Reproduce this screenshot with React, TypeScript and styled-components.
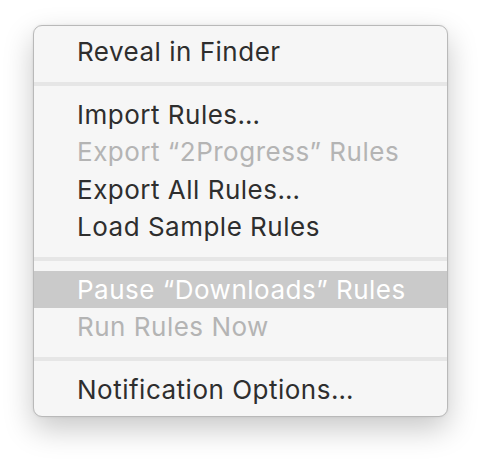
import React from "react";
import styled, { createGlobalStyle } from "styled-components";

const Global = createGlobalStyle`
  html, body { margin: 0; padding: 0; background: #ffffff; }
  body { width: 482px; height: 460px; overflow: hidden; }
`;

const Page = styled.div`
  padding: 25px 34px 0 33px;
  width: 482px;
  box-sizing: border-box;
`;

const Menu = styled.div`
  width: 415px;
  box-sizing: border-box;
  background: #f6f6f6;
  border: 1px solid #b9b9b9;
  border-radius: 9px;
  padding: 7px 0 8px;
  box-shadow: 0 12px 30px rgba(0, 0, 0, 0.22), 0 0 3px rgba(0, 0, 0, 0.08);
  font-family: Inter, "Liberation Sans", sans-serif;
`;

const Item = styled.div<{ $disabled?: boolean; $active?: boolean }>`
  height: 37.5px;
  display: flex;
  align-items: center;
  padding-left: 43px;
  font-size: 26px;
  letter-spacing: 0.5px;
  color: ${(p) => (p.$active ? "#ffffff" : p.$disabled ? "#b4b4b4" : "#2e2e2e")};
  background: ${(p) => (p.$active ? "#cacaca" : "transparent")};
  white-space: nowrap;
`;

const Separator = styled.div`
  height: 4px;
  margin: 11px 0 10px;
  background: #e6e6e6;
`;

export default function App() {
  return (
    <>
      <Global />
      <Page>
        <Menu>
          <Item>Reveal in Finder</Item>
          <Separator />
          <Item>Import Rules…</Item>
          <Item $disabled>Export “2Progress” Rules</Item>
          <Item>Export All Rules…</Item>
          <Item>Load Sample Rules</Item>
          <Separator />
          <Item $active>Pause “Downloads” Rules</Item>
          <Item $disabled>Run Rules Now</Item>
          <Separator />
          <Item>Notification Options…</Item>
        </Menu>
      </Page>
    </>
  );
}
